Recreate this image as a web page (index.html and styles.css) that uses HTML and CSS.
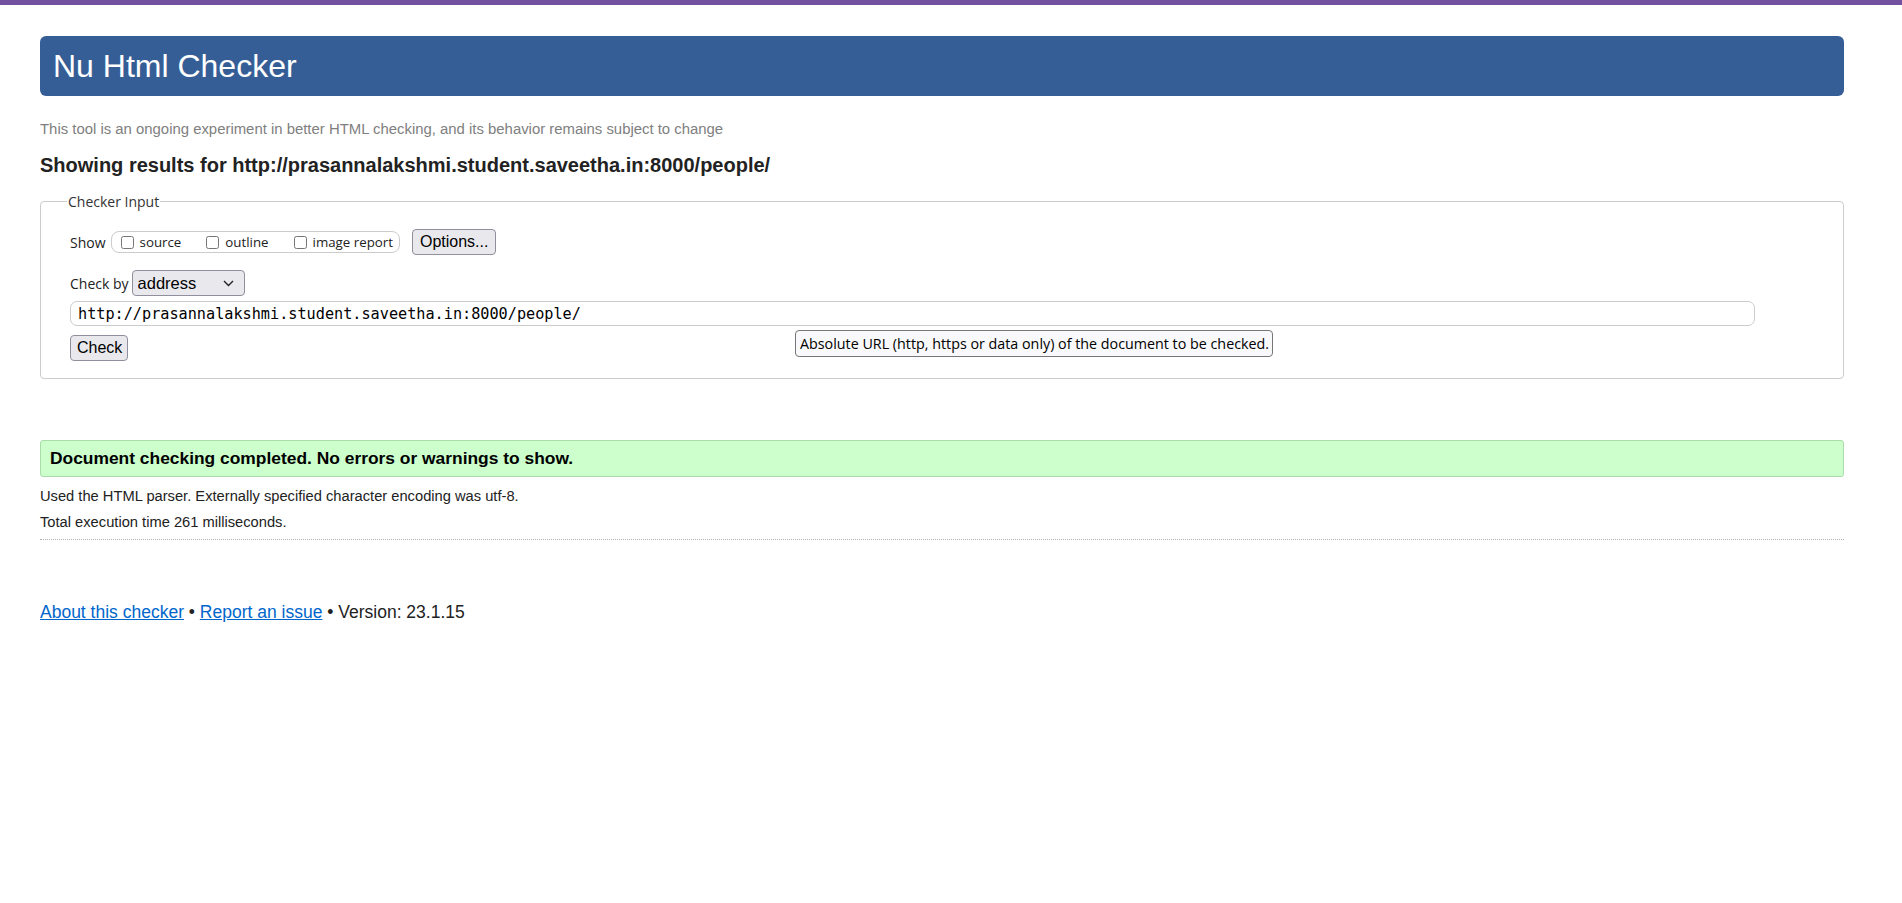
FILE: index.html
```html
<!DOCTYPE html>
<html lang="en">
<head>
<meta charset="utf-8">
<title>Showing results for http://prasannalakshmi.student.saveetha.in:8000/people/ - Nu Html Checker</title>
<link rel="stylesheet" href="styles.css">
</head>
<body>
<div class="topbar"></div>
<div class="page">
  <header class="masthead"><h1>Nu Html Checker</h1></header>
  <p class="about">This tool is an ongoing experiment in better HTML checking, and its behavior remains subject to change</p>
  <h2 class="showing">Showing results for http://prasannalakshmi.student.saveetha.in:8000/people/</h2>

  <fieldset class="checker">
    <legend>Checker Input</legend>
    <div class="row show-row">
      <span class="lbl">Show</span>
      <span class="group">
        <label class="opt"><input type="checkbox"><span>source</span></label>
        <label class="opt opt2"><input type="checkbox"><span>outline</span></label>
        <label class="opt"><input type="checkbox"><span>image report</span></label>
      </span>
      <button class="btn options">Options...</button>
    </div>
    <div class="row by-row">
      <span class="lbl">Check by</span>
      <span class="selwrap">
        <select class="sel"><option>address</option></select>
        <svg class="chev" width="11" height="7" viewBox="0 0 11 7"><path d="M1 1l4.5 4.5L10 1" fill="none" stroke="#222" stroke-width="1.4"/></svg>
      </span>
    </div>
    <div class="row url-row">
      <input class="url" type="text" value="http://prasannalakshmi.student.saveetha.in:8000/people/">
    </div>
    <div class="row check-row">
      <button class="btn check">Check</button>
      <span class="tooltip">Absolute URL (http, https or data only) of the document to be checked.</span>
    </div>
  </fieldset>

  <div class="success">Document checking completed. No errors or warnings to show.</div>
  <p class="info first">Used the HTML parser. Externally specified character encoding was utf-8.</p>
  <p class="info">Total execution time 261 milliseconds.</p>
  <hr class="sep">

  <p class="footer"><a href="#">About this checker</a> • <a href="#">Report an issue</a> • Version: 23.1.15</p>
</div>
</body>
</html>
```

FILE: styles.css
```css
html, body {
  margin: 0;
  padding: 0;
  background: #fff;
}
body {
  font-family: "Liberation Sans", Arial, sans-serif;
  color: #222;
}
.topbar {
  height: 5px;
  background: #7351a0;
}
.page {
  padding: 0 58px 0 40px;
}
.masthead {
  margin-top: 31px;
  height: 60px;
  background: #365e96;
  border-radius: 6px;
  display: flex;
  align-items: center;
}
.masthead h1 {
  margin: 0;
  padding-left: 13px;
  font-weight: normal;
  font-size: 32px;
  line-height: 60px;
  color: #fff;
}
.about {
  margin: 23px 0 0;
  font-size: 14.9px;
  line-height: 20px;
  color: #808080;
}
.showing {
  margin: 14px 0 0;
  font-size: 20px;
  line-height: 24px;
  font-weight: bold;
  color: #222;
}
.checker {
  position: relative;
  margin: 16px 0 0;
  padding: 0 0 17px 29px;
  border: 1px solid #ccc;
  border-radius: 4px;
  min-width: 0;
}
.checker legend {
  margin-left: -3px;
  padding: 0 1px;
  font-family: "Open Sans", "Liberation Sans", sans-serif;
  font-size: 14px;
  line-height: 17px;
  color: #333;
}
.row {
  display: flex;
  align-items: center;
}
.lbl {
  font-family: "Open Sans", "Liberation Sans", sans-serif;
  font-size: 14px;
  color: #222;
}
.show-row {
  margin-top: 19px;
  height: 26px;
}
.group {
  margin-left: 5px;
  height: 20px;
  display: flex;
  align-items: center;
  border: 1px solid #ccc;
  border-radius: 8px;
  padding: 0 6px 0 6px;
}
.opt {
  display: flex;
  align-items: center;
  font-family: "Open Sans", "Liberation Sans", sans-serif;
  font-size: 13.3px;
  color: #222;
  margin-right: 22px;
}
.opt:last-child {
  margin-right: 0;
}
.opt input {
  margin: 0 6px 0 3px;
  width: 13px;
  height: 13px;
}
.btn {
  font-family: "Liberation Sans", Arial, sans-serif;
  font-size: 16px;
  color: #000;
  background: #e9e9ed;
  border: 1px solid #8f8f9d;
  border-radius: 4px;
  height: 26px;
  line-height: 22px;
}
.options {
  margin-left: 12px;
  padding: 0 7px;
  width: 84px;
}
.by-row {
  margin-top: 15px;
  height: 26px;
}
.selwrap {
  position: relative;
  margin-left: 3px;
  display: flex;
}
.sel {
  appearance: none;
  -webkit-appearance: none;
  width: 113px;
  height: 26px;
  padding: 0 0 0 5px;
  font-family: "Liberation Sans", Arial, sans-serif;
  font-size: 16.5px;
  color: #000;
  background: #e9e9ed;
  border: 1px solid #8f8f9d;
  border-radius: 4px;
}
.chev {
  position: absolute;
  left: 91px;
  top: 10px;
  pointer-events: none;
}
.url-row {
  margin-top: 5px;
}
.url {
  box-sizing: border-box;
  width: 1685px;
  height: 25px;
  padding: 0 7px;
  font-family: "DejaVu Sans Mono", "Liberation Mono", monospace;
  font-size: 15.2px;
  color: #000;
  border: 1px solid #ccc;
  border-radius: 7px;
  background: #fff;
  outline: none;
}
.check-row {
  position: relative;
  margin-top: 9px;
}
.check {
  width: 58px;
  padding: 0 6px;
}
.tooltip {
  position: absolute;
  left: 725px;
  top: -5px;
  box-sizing: border-box;
  width: 478px;
  height: 27px;
  padding: 0 4px;
  line-height: 25px;
  font-family: "Open Sans", "Liberation Sans", sans-serif;
  font-size: 14.3px;
  color: #000;
  background: #f9f9fb;
  border: 1px solid #767676;
  border-radius: 4px;
  white-space: nowrap;
}
.success {
  margin-top: 61px;
  box-sizing: border-box;
  height: 37px;
  padding: 0 9px;
  display: flex;
  align-items: center;
  background: #ccffcc;
  border: 1px solid #aadcaa;
  border-radius: 3px;
  font-weight: bold;
  font-size: 17.4px;
  color: #000;
}
.info {
  margin: 6px 0 0;
  font-size: 14.7px;
  line-height: 20px;
  color: #222;
}
.info.first {
  margin-top: 9px;
}
.sep {
  margin: 7px 0 0;
  border: 0;
  border-top: 1px dotted #b0b0b0;
  height: 0;
}
.footer {
  margin: 61px 0 0;
  font-size: 17.5px;
  line-height: 22px;
  color: #222;
}
.footer a {
  color: #0066cc;
  text-decoration: underline;
}
```
